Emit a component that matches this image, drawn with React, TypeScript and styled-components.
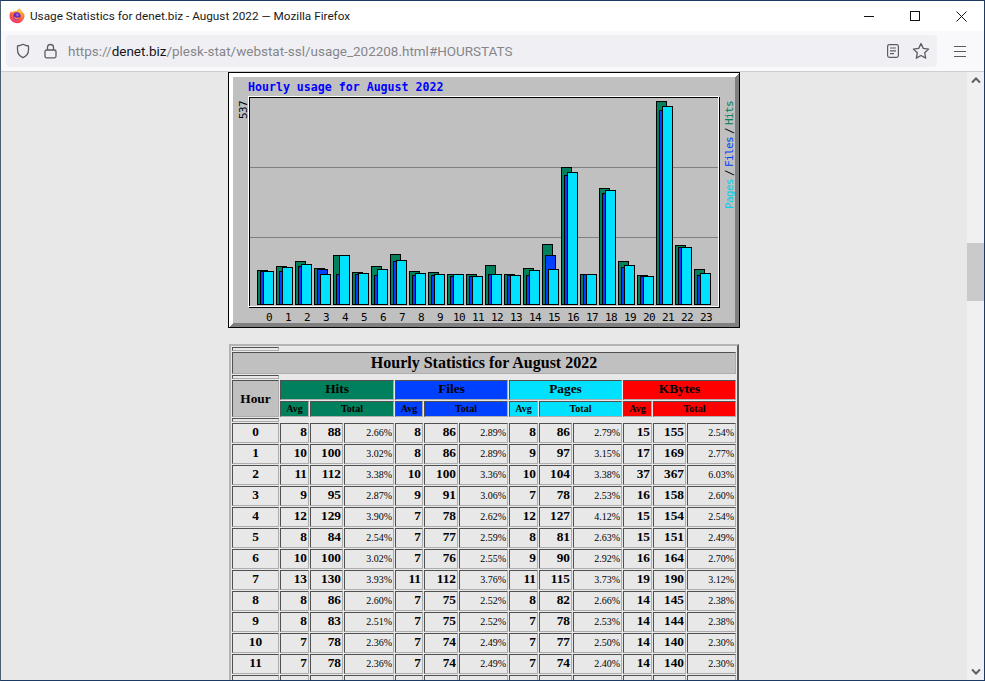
import React from "react";
import styled, { createGlobalStyle } from "styled-components";

const Global = createGlobalStyle`
  html, body { margin: 0; padding: 0; width: 985px; height: 681px; overflow: hidden; background: #fff; }
`;

const Frame = styled.div`
  box-sizing: border-box; width: 985px; height: 681px; display: flex; flex-direction: column;
  border: 1px solid #1c3a63; border-left-color: #4a5c70; overflow: hidden;
  font-family: Roboto, "Noto Sans", sans-serif;
`;
const TitleBar = styled.div`
  flex: none; height: 30px; display: flex; align-items: center; background: #fff; padding-left: 8px;
`;
const TitleText = styled.span`
  margin-left: 5px; font-size: 11.75px; color: #1a1a1a; white-space: nowrap;
`;
const WindowControls = styled.div`
  margin-left: auto; display: flex;
`;
const WindowButton = styled.div`
  width: 46px; height: 30px; display: flex; align-items: center; justify-content: center; color: #111;
`;
const Toolbar = styled.div`
  box-sizing: border-box; flex: none; height: 41px; display: flex; align-items: flex-start;
  background: #f9f9fb; border-bottom: 1px solid #cfcfd2; padding: 4px 0 0 5px;
`;
const UrlBar = styled.div`
  flex: none; width: 931px; height: 32px; display: flex; align-items: center; border-radius: 4px;
  background: #f0f0f4; padding-left: 9px; box-sizing: border-box; color: #5b5b66;
`;
const LockSlot = styled.span`
  display: flex; margin-left: 13px; margin-right: 10px;
`;
const Url = styled.span`
  font-size: 13.47px; color: #85858a; white-space: nowrap; padding-top: 1px;
`;
const Host = styled.span`
  color: #15141a;
`;
const UrlActions = styled.div`
  margin-left: auto; margin-right: 7px; display: flex; align-items: center; gap: 12px;
`;
const MenuSlot = styled.div`
  display: flex; margin-left: 17px; height: 32px; align-items: center; color: #5b5b66;
`;
const Body = styled.div`
  flex: 1; min-height: 0; display: flex;
`;
const Page = styled.div`
  flex: 1; min-width: 0; overflow: hidden; background: #e8e8e8; display: flex; flex-direction: column; align-items: center;
`;
const Scrollbar = styled.div`
  flex: none; width: 17px; background: #f0f0f0; display: flex; flex-direction: column; color: #606060;
`;
const ScrollArrow = styled.div<{ $end?: boolean }>`
  flex: none; height: 17px; display: flex; align-items: center; justify-content: center;
  margin-top: ${(p) => (p.$end ? "auto" : "0")};
`;
const Thumb = styled.div`
  flex: none; height: 58px; margin-top: 154px; background: #cacaca;
`;
const Chart = styled.svg`
  flex: none; display: block; width: 512px; height: 256px; margin-bottom: 16px;
  font-family: "DejaVu Sans Mono", "Liberation Mono", monospace;
`;
const Table = styled.table`
  flex: none; box-sizing: border-box; width: 510px; table-layout: fixed; border-collapse: separate; border-spacing: 1px;
  border: 2px solid; border-color: #b4b4b4 #5a5a5a #5a5a5a #b4b4b4;
  font-family: "Liberation Serif", "Times New Roman", serif; color: #000;
`;
const Col = styled.col<{ $w: number }>`
  width: ${(p) => p.$w}px;
`;
const Cell = styled.td<{ $h?: number; $bg?: string; $size?: number; $align?: string; $weight?: number; $lift?: number }>`
  box-sizing: border-box; padding: 0 1px ${(p) => p.$lift ?? 0}px; height: ${(p) => p.$h ?? 20}px; line-height: 1;
  border: 1px solid; border-color: #505050 #adadad #adadad #505050;
  background: ${(p) => p.$bg ?? "transparent"};
  font-size: ${(p) => p.$size ?? 13.33}px; font-weight: ${(p) => p.$weight ?? 700};
  text-align: ${(p) => p.$align ?? "right"}; vertical-align: middle; white-space: nowrap; overflow: hidden;
`;

const COLS = [47, 29, 33, 50, 28, 34, 49, 29, 33, 49, 29, 33, 49];
const C_HITS = "#00805c";
const C_FILES = "#0040ff";
const C_PAGES = "#00e0ff";
const C_KB = "#ff0000";
const GROUPS: [string, string][] = [["Hits", C_HITS], ["Files", C_FILES], ["Pages", C_PAGES], ["KBytes", C_KB]];

const ROWS: (string | number)[][] = [
  [0, 8, 88, "2.66%", 8, 86, "2.89%", 8, 86, "2.79%", 15, 155, "2.54%"],
  [1, 10, 100, "3.02%", 8, 86, "2.89%", 9, 97, "3.15%", 17, 169, "2.77%"],
  [2, 11, 112, "3.38%", 10, 100, "3.36%", 10, 104, "3.38%", 37, 367, "6.03%"],
  [3, 9, 95, "2.87%", 9, 91, "3.06%", 7, 78, "2.53%", 16, 158, "2.60%"],
  [4, 12, 129, "3.90%", 7, 78, "2.62%", 12, 127, "4.12%", 15, 154, "2.54%"],
  [5, 8, 84, "2.54%", 7, 77, "2.59%", 8, 81, "2.63%", 15, 151, "2.49%"],
  [6, 10, 100, "3.02%", 7, 76, "2.55%", 9, 90, "2.92%", 16, 164, "2.70%"],
  [7, 13, 130, "3.93%", 11, 112, "3.76%", 11, 115, "3.73%", 19, 190, "3.12%"],
  [8, 8, 86, "2.60%", 7, 75, "2.52%", 8, 82, "2.66%", 14, 145, "2.38%"],
  [9, 8, 83, "2.51%", 7, 75, "2.52%", 7, 78, "2.53%", 14, 144, "2.38%"],
  [10, 7, 78, "2.36%", 7, 74, "2.49%", 7, 77, "2.50%", 14, 140, "2.30%"],
  [11, 7, 78, "2.36%", 7, 74, "2.49%", 7, 74, "2.40%", 14, 140, "2.30%"],
];

const BARS: [number, number, number][] = [
  [270, 271, 271], [266, 271, 267], [261, 266, 264], [268, 269, 274], [255, 274, 255], [272, 274, 273],
  [266, 275, 269], [254, 261, 260], [271, 275, 273], [272, 275, 274], [274, 276, 274], [274, 276, 276],
  [265, 274, 274], [274, 275, 275], [268, 275, 270], [244, 255, 269], [167, 175, 172], [274, 274, 274],
  [188, 193, 190], [261, 267, 265], [275, 276, 276], [101, 110, 106], [245, 247, 247], [269, 275, 273],
];
const BASE = 304.5;

const Bar = ({ x, top, fill }: { x: number; top: number; fill: string }) => (
  <rect x={x + 0.5} y={top + 0.5} width={10} height={BASE - top - 0.5} fill={fill} stroke="#000" />
);

const Small = ({ at, fill, children }: { at: [number, number]; fill: string; children: React.ReactNode }) => (
  <text transform={`translate(${at[0]} ${at[1]}) rotate(-90)`} fontSize={11} letterSpacing={-0.62} fill={fill}>{children}</text>
);

const UsageChart = () => (
  <Chart viewBox="228 72 512 256" shapeRendering="crispEdges">
    <rect x={228} y={72} width={512} height={256} fill="#c0c0c0" />
    <polygon points="228,72 740,72 735,77 233,77" fill="#fff" />
    <polygon points="228,72 233,77 233,323 228,328" fill="#fff" />
    <polygon points="740,72 740,328 228,328 233,323 735,323 735,77" fill="#808080" />
    <rect x={228.5} y={72.5} width={511} height={255} fill="none" stroke="#000" />
    <rect x={249.5} y={97.5} width={470} height={210} fill="none" stroke="#000" />
    <rect x={248.5} y={96.5} width={470} height={210} fill="none" stroke="#fff" />
    <path d="M250 167.5H718M250 237.5H718" stroke="#808080" />
    {BARS.map(([h, f, p], i) => (
      <g key={i}>
        <Bar x={257 + i * 19} top={h} fill={C_HITS} />
        <Bar x={260 + i * 19} top={f} fill={C_FILES} />
        <Bar x={263 + i * 19} top={p} fill={C_PAGES} />
      </g>
    ))}
    <g shapeRendering="auto">
      <text x={248} y={91} fontSize={11.6} fontWeight={700} fill="#0000ff">Hourly usage for August 2022</text>
      {BARS.map((_, i) => (
        <text key={i} x={269 + i * 19} y={321} fontSize={11} letterSpacing={-0.62} textAnchor="middle" fill="#000">{i}</text>
      ))}
      <Small at={[247, 119]} fill="#000">537</Small>
      <Small at={[733, 209]} fill="#00cfee">Pages</Small>
      <Small at={[733, 176]} fill="#000">/</Small>
      <Small at={[733, 167]} fill={C_FILES}>Files</Small>
      <Small at={[733, 134]} fill="#000">/</Small>
      <Small at={[733, 125]} fill={C_HITS}>Hits</Small>
    </g>
  </Chart>
);

const FirefoxLogo = () => (
  <svg width="16" height="16" viewBox="0 0 16 16">
    <defs>
      <radialGradient id="ffBody" cx="0.65" cy="0.2" r="1">
        <stop offset="0" stopColor="#ffd03a" />
        <stop offset="0.45" stopColor="#ff7a2a" />
        <stop offset="0.8" stopColor="#f5307a" />
        <stop offset="1" stopColor="#d81f8e" />
      </radialGradient>
    </defs>
    <path d="M11 0.3c.3 1.6 1.1 2 2 3 1.5 1.5 2.5 3 2.5 5A7.5 7.5 0 1 1 .9 5.4c.4-1 .7-1.6 1.3-2.3l.5 1.6C3.8 3.4 5.6 2.8 7.500 3c.9-1.300 2.400-2 3.500-2.700z" fill="url(#ffBody)" />
    <circle cx="8" cy="8" r="3.700" fill="#6b2bb8" />
    <path d="M4.600 8.400c.5 1.700 2 2.900 3.700 2.900 1.600 0 3-1 3.500-2.500-1 .9-2.600 1.300-4 .9-1.200-.3-2.300-.7-3.200-1.300z" fill="#ff8a3a" />
    <circle cx="8.400" cy="6.800" r="1.500" fill="#a05ae0" />
  </svg>
);

const ShieldIcon = () => (
  <svg width="16" height="16" viewBox="0 0 16 16" fill="none" stroke="currentColor" strokeWidth="1.300">
    <path d="M8 1.300c1.800 1 3.600 1.500 5.500 1.700v3.800c0 3.500-2 6.500-5.500 7.900-3.500-1.400-5.500-4.400-5.500-7.900V3c1.900-.2 3.700-.7 5.500-1.700z" strokeLinejoin="round" />
  </svg>
);
const LockIcon = () => (
  <svg width="14" height="16" viewBox="0 0 14 16" fill="none" stroke="currentColor" strokeWidth="1.300">
    <path d="M3.500 7V4.500a3 3 0 0 1 6 0V7" />
    <rect x="1" y="7" width="11" height="7.800" rx="1.500" />
  </svg>
);
const ReaderIcon = () => (
  <svg width="14" height="16" viewBox="0 0 14 16" fill="none" stroke="currentColor" strokeWidth="1.200">
    <rect x="1.600" y="1.600" width="10.800" height="12.800" rx="1.800" />
    <path d="M4 5H10M4 7.800H10M4 10.600H8" />
  </svg>
);
const StarIcon = () => (
  <svg width="18" height="18" viewBox="0 0 18 18" fill="none" stroke="currentColor" strokeWidth="1.300" strokeLinejoin="round">
    <path d="M9 1.500l2.300 4.900 5.300.7-3.900 3.700 1 5.300L9 13.500l-4.700 2.600 1-5.300L1.400 7.100l5.300-.7z" />
  </svg>
);
const MenuIcon = () => (
  <svg width="12" height="11" viewBox="0 0 12 11" stroke="currentColor" strokeWidth="1" shapeRendering="crispEdges">
    <path d="M0 .5H12M0 5.500H12M0 10.500H12" />
  </svg>
);
const MinimizeIcon = () => (
  <svg width="10" height="10" viewBox="0 0 10 10" stroke="currentColor" shapeRendering="crispEdges">
    <path d="M0 5.500H10" />
  </svg>
);
const MaximizeIcon = () => (
  <svg width="10" height="10" viewBox="0 0 10 10" fill="none" stroke="currentColor" shapeRendering="crispEdges">
    <rect x=".5" y=".5" width="9" height="9" />
  </svg>
);
const CloseIcon = () => (
  <svg width="11" height="11" viewBox="0 0 11 11" stroke="currentColor" strokeWidth="1">
    <path d="M.5 .5L10.500 10.500M10.500 .5L.5 10.500" />
  </svg>
);
const Chevron = ({ down }: { down?: boolean }) => (
  <svg width="10" height="7" viewBox="0 0 10 7" fill="none" stroke="currentColor" strokeWidth="2">
    <path d={down ? "M1 1.500L5 5.500L9 1.500" : "M1 5.500L5 1.500L9 5.500"} />
  </svg>
);

const StatsTable = () => (
  <Table>
    <colgroup>
      {COLS.map((w, i) => <Col key={i} $w={w} />)}
    </colgroup>
    <tbody>
      <tr><Cell $h={4} /></tr>
      <tr>
        <Cell colSpan={13} $h={22} $bg="#c0c0c0" $size={16} $align="center">Hourly Statistics for August 2022</Cell>
      </tr>
      <tr><Cell $h={4} /></tr>
      <tr>
        <Cell rowSpan={2} $h={37} $bg="#c0c0c0" $align="center">Hour</Cell>
        {GROUPS.map(([n, c]) => (
          <Cell key={n} colSpan={3} $bg={c} $align="center" $lift={2}>{n}</Cell>
        ))}
      </tr>
      <tr>
        {GROUPS.map(([n, c]) => (
          <React.Fragment key={n}>
            <Cell $h={16} $bg={c} $size={10} $align="center">Avg</Cell>
            <Cell colSpan={2} $h={16} $bg={c} $size={10} $align="center">Total</Cell>
          </React.Fragment>
        ))}
      </tr>
      <tr><Cell $h={4} /></tr>
      {ROWS.map((r, i) => (
        <tr key={i}>
          {r.map((v, j) => {
            const pct = j > 0 && j % 3 === 0;
            return (
              <Cell key={j} $align={j === 0 ? "center" : "right"} $size={pct ? 10 : 13.33} $weight={pct ? 400 : 700} $lift={pct ? 1 : 3}>{v}</Cell>
            );
          })}
        </tr>
      ))}
      <tr>
        {COLS.map((_, j) => <Cell key={j} />)}
      </tr>
    </tbody>
  </Table>
);

export default function App() {
  return (
    <Frame>
      <Global />
      <TitleBar>
        <FirefoxLogo />
        <TitleText>Usage Statistics for denet.biz - August 2022 — Mozilla Firefox</TitleText>
        <WindowControls>
          <WindowButton><MinimizeIcon /></WindowButton>
          <WindowButton><MaximizeIcon /></WindowButton>
          <WindowButton><CloseIcon /></WindowButton>
        </WindowControls>
      </TitleBar>
      <Toolbar>
        <UrlBar>
          <ShieldIcon />
          <LockSlot><LockIcon /></LockSlot>
          <Url>https://<Host>denet.biz</Host>/plesk-stat/webstat-ssl/usage_202208.html#HOURSTATS</Url>
          <UrlActions>
            <ReaderIcon />
            <StarIcon />
          </UrlActions>
        </UrlBar>
        <MenuSlot><MenuIcon /></MenuSlot>
      </Toolbar>
      <Body>
        <Page>
          <UsageChart />
          <StatsTable />
        </Page>
        <Scrollbar>
          <ScrollArrow><Chevron /></ScrollArrow>
          <Thumb />
          <ScrollArrow $end><Chevron down /></ScrollArrow>
        </Scrollbar>
      </Body>
    </Frame>
  );
}
